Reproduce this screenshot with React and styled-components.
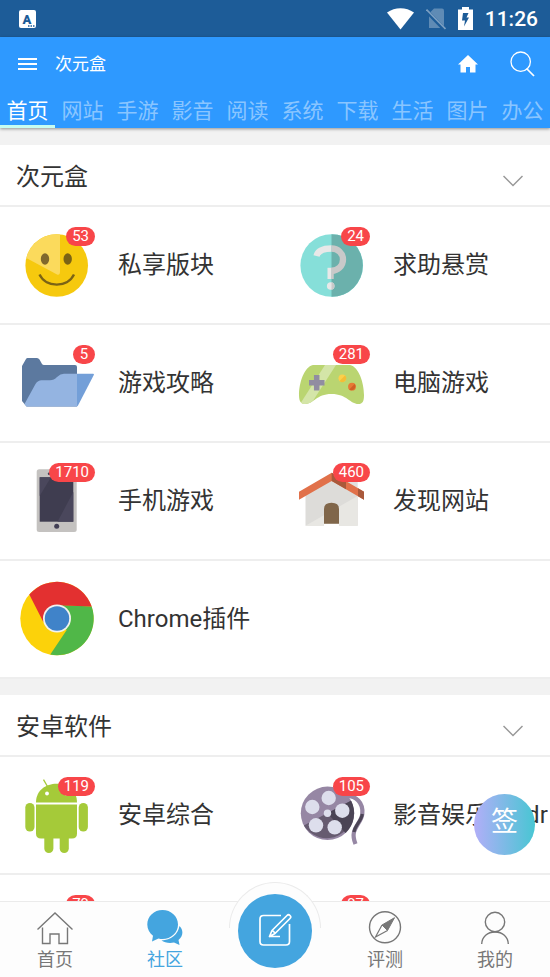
import React, { useState } from "react";
import styled, { createGlobalStyle, css } from "styled-components";

const GlobalStyle = createGlobalStyle`
  :root {
    --color-primary: #2e99ff;
    --color-primary-dark: #1d5c98;
    --color-accent: #44a5df;
    --color-badge: #f84649;
    --color-text: #333333;
    --color-muted: #777777;
    --color-line: #eeeeee;
    --color-back: #f2f2f2;
  }
  * {
    box-sizing: border-box;
  }
  body {
    margin: 0;
    font-family: Roboto, "Noto Sans CJK SC", sans-serif;
    color: var(--color-text);
    background: var(--color-back);
  }
  button {
    margin: 0;
    padding: 0;
    border: 0;
    background: none;
    font: inherit;
    color: inherit;
    cursor: pointer;
  }
  a {
    color: inherit;
    text-decoration: none;
  }
  svg {
    display: block;
  }
`;

const Page = styled.div`
  height: 100vh;
  display: flex;
  flex-direction: column;
  overflow: hidden;
`;

const StatusBar = styled.div`
  height: 37px;
  flex: none;
  display: flex;
  align-items: center;
  gap: 12px;
  padding: 0 12px 0 19px;
  background: var(--color-primary-dark);
  color: #ffffff;
`;
const Spacer = styled.div`
  flex: 1;
`;
const Clock = styled.time`
  font-size: 21px;
  font-weight: 500;
  line-height: 24px;
`;

const Header = styled.header`
  flex: none;
  position: relative;
  background: var(--color-primary);
  color: #ffffff;
  box-shadow: 0 1px 3px rgba(0, 0, 0, 0.4);
`;
const Toolbar = styled.div`
  height: 55px;
  display: flex;
  align-items: center;
  padding: 0 15px 2px 18px;
`;
const Title = styled.h1`
  flex: 1;
  margin: 0 0 0 17px;
  font-size: 17px;
  font-weight: 400;
  line-height: 24px;
`;
const IconButton = styled.button`
  margin-left: ${({ $space }) => $space || "0"};
`;
const Tabs = styled.nav`
  display: flex;
  overflow-x: auto;
  scrollbar-width: none;
`;
const Tab = styled.button`
  flex: 0 0 55px;
  height: 36px;
  padding-top: 2px;
  font-size: 21px;
  line-height: 34px;
  white-space: nowrap;
  color: rgba(255, 255, 255, 0.46);
  ${({ $active }) => $active && css`
    color: #ffffff;
    box-shadow: inset 0 -3px #c6fcf1;
  `}
`;

const Content = styled.main`
  flex: 1;
  min-height: 0;
  padding-top: 17px;
  overflow-y: auto;
  scrollbar-width: none;
`;
const Group = styled.section`
  margin-bottom: 16px;
  background: #ffffff;
`;
const GroupHead = styled.button`
  width: 100%;
  height: 62px;
  display: flex;
  align-items: center;
  justify-content: space-between;
  padding: 3px 27px 0 16px;
  border-bottom: 2px solid var(--color-line);
  font-size: 24px;
  line-height: 32px;
  & > svg {
    margin-top: 8px;
  }
`;
const Row = styled.div`
  display: grid;
  grid-template-columns: 1fr 1fr;
  height: 118px;
  border-bottom: 2px solid var(--color-line);
`;
const Forum = styled.a`
  min-width: 0;
  display: flex;
  align-items: center;
  gap: 24px;
  padding: 2px 2px 0 20px;
`;
const ForumIcon = styled.span`
  flex: none;
  position: relative;
  width: 74px;
  height: 74px;
`;
const Badge = styled.span`
  position: absolute;
  top: -2px;
  right: -1px;
  min-width: 22px;
  padding: 0 6px;
  border-radius: 10px;
  background: var(--color-badge);
  color: #ffffff;
  font-size: 15px;
  line-height: 19px;
  text-align: center;
`;
const ForumName = styled.span`
  flex: 1;
  height: 32px;
  margin-bottom: 2px;
  overflow: hidden;
  word-break: break-all;
  font-size: 24px;
  line-height: 32px;
`;

const SignButton = styled.button`
  position: fixed;
  right: 15px;
  bottom: 122px;
  width: 61px;
  height: 61px;
  padding-bottom: 6px;
  border-radius: 50%;
  background: linear-gradient(90deg, #b2aef8, #48c6d3);
  color: #ffffff;
  font-size: 27px;
  line-height: 40px;
`;

const BottomNav = styled.nav`
  flex: none;
  position: relative;
  height: 76px;
  display: flex;
  background: #fdfdfd;
  border-top: 1px solid #ebebeb;
`;
const NavItem = styled.a`
  flex: 1;
  display: flex;
  flex-direction: column;
  align-items: center;
  gap: 1px;
  padding-top: 8px;
  font-size: 18px;
  line-height: 26px;
  color: ${({ $active }) => ($active ? "var(--color-accent)" : "var(--color-muted)")};
`;
const NavCenter = styled.div`
  flex: 1;
  display: flex;
  justify-content: center;
`;
const Dome = styled.span`
  position: absolute;
  top: -20px;
  width: 92px;
  height: 46px;
  border: 1px solid #ebebeb;
  border-bottom: 0;
  border-radius: 46px 46px 0 0;
  background: #fdfdfd;
`;
const PostButton = styled.button`
  position: absolute;
  top: -8px;
  width: 74px;
  height: 74px;
  display: flex;
  align-items: center;
  justify-content: center;
  border-radius: 50%;
  background: var(--color-accent);
  color: #ffffff;
`;

/* status bar glyphs */
const AppGlyph = () => (
  <svg width="17" height="18" viewBox="0 0 17 18" aria-hidden="true">
    <rect width="17" height="18" rx="2" fill="#fff" />
    <text x="8" y="14" textAnchor="middle" fontFamily="Roboto" fontSize="13" fontWeight="900" fill="#1d5c98">A</text>
    <path d="M9 16h1.5M11.5 16H13M14 16h1.5" stroke="#1d5c98" strokeWidth="1.4" />
  </svg>
);
const WifiGlyph = () => (
  <svg width="27" height="22" viewBox="0 0 27 22" aria-hidden="true">
    <path d="M0 4.5C8-1.2 19-1.2 27 4.5L13.5 21.5Z" fill="#fff" />
  </svg>
);
const NoSimGlyph = () => (
  <svg width="20" height="22" viewBox="0 0 20 22" aria-hidden="true">
    <path d="M8 .5H16q2 0 2 2V20H3V5.5Z" fill="#5f8bb5" />
    <path d="M0 2.5 19 22" stroke="#1d5c98" strokeWidth="4" />
    <path d="M.5 1.5 19.5 21" stroke="#7b9fc2" strokeWidth="1.7" />
  </svg>
);
const BatteryGlyph = () => (
  <svg width="15" height="23" viewBox="0 0 15 23" aria-hidden="true">
    <path d="M4 0h7v2.5h4V23H0V2.5h4Z" fill="#fff" />
    <path d="M5 6h5.5L8.5 10.5H11L6 19.5 7 13.5H4Z" fill="#1d5c98" />
  </svg>
);

/* toolbar glyphs */
const MenuGlyph = () => (
  <svg width="20" height="14" viewBox="0 0 20 14" aria-hidden="true">
    <path d="M0 2h19M0 7h19M0 12h19" stroke="#fff" strokeWidth="2" />
  </svg>
);
const HomeGlyph = () => (
  <svg width="20" height="18" viewBox="0 0 20 18" aria-hidden="true">
    <path d="M10 0 0 9.5H2.5V17.5H8V12H12V17.5H17.5V9.5H20Z" fill="#fff" />
  </svg>
);
const SearchGlyph = () => (
  <svg width="25" height="26" viewBox="0 0 25 26" fill="none" stroke="#fff" strokeWidth="1.3" aria-hidden="true">
    <circle cx="10.7" cy="10.7" r="9.7" />
    <path d="M16.5 17.5 24 25" strokeWidth="1.7" />
  </svg>
);
const Chevron = () => (
  <svg width="20" height="12" viewBox="0 0 20 12" fill="none" stroke="#999" strokeWidth="1.5" aria-hidden="true">
    <path d="M.5 1 10 10.5 19.5 1" />
  </svg>
);

/* forum pictures, all on a 74 x 74 field */
const Picture = ({ children }) => (
  <svg width="74" height="74" viewBox="0 0 74 74" overflow="visible" aria-hidden="true">{children}</svg>
);
const Smiley = () => (
  <Picture>
    <circle cx="36.7" cy="36.5" r="31.3" fill="#f6c90e" />
    <path d="M40 5.4A31.3 31.3 0 0 0 6.3 29L37 45.5q3 1 3-3Z" fill="#fbda5c" />
    <ellipse cx="25" cy="30" rx="4.2" ry="5.8" fill="#80682d" />
    <ellipse cx="47.7" cy="30" rx="4.2" ry="5.8" fill="#7b6315" />
    <path d="M19.5 45.5C26 59 47.5 59 54 45.5" fill="none" stroke="#7b6315" strokeWidth="2.4" />
  </Picture>
);
const Question = () => (
  <Picture>
    <circle cx="36.7" cy="36.5" r="31.3" fill="#86dfd9" />
    <path d="M36.5 5.2A31.3 31.3 0 0 1 36.5 67.8Z" fill="#6bb1ac" />
    <g fill="none" strokeWidth="6.3">
      <path d="M21.500 27C23 21.500 29 19.500 36.500 19.500" stroke="#e8e8e8" />
      <path d="M36.5 19.5C43 19.5 48 24.5 48 30.5C48 37 43 41.5 36.5 42" stroke="#c9c9c9" />
      <path d="M34.5 38.8V50" stroke="#e8e8e8" strokeWidth="4" />
      <path d="M37.5 38.8V50" stroke="#c9c9c9" strokeWidth="2.5" />
    </g>
    <circle cx="35.7" cy="57" r="3.8" fill="#e8e8e8" />
    <path d="M36.5 53.3A3.8 3.8 0 0 1 36.5 60.7Z" fill="#c9c9c9" />
  </Picture>
);
const Folder = () => (
  <Picture>
    <g transform="translate(0 1)">
      <path d="M2 18 6 11q.6-1 1.5-1H17q1.5 0 2.5 1.5L22 16q.7 1 2 1H55q2 0 2 2V58.5H6.5L2 53Z" fill="#5c799f" />
      <path d="M6.5 58.5 4.5 56 15.5 36Q18 32.3 21.5 32.3H30Q34 32.3 37 29Q40.5 25.8 44 25.8H57V58.5Z" fill="#94b4e1" />
      <path d="M57 25.8H73q1.3 0 .8 1.2L58 57.5 57 58.5Z" fill="#739fd8" />
    </g>
  </Picture>
);
const Gamepad = () => (
  <Picture>
    <path
      d="M18 18H55C64 20 69 36 69 48C69 54.5 67.5 57 63.5 57C55 57 52 47 36.5 47C21 47 19 57 10 57C6 57 4 54.5 4 48C4 36 9 20 18 18Z"
      fill="#bad571"
    />
    <path d="M30 18H41L18.5 53C16 55.5 13.5 57 10 57C8 57 6.8 56.5 6 55.5Z" fill="#d4e5a8" />
    <path d="M21.7 28V43.5M14 35.7H29.5" stroke="#918da1" strokeWidth="5.5" />
    <circle cx="47.3" cy="31.3" r="3.8" fill="#fbd04b" />
    <path d="M50 28.6A3.8 3.8 0 0 1 44.6 34Z" fill="#f4bd36" />
    <circle cx="57" cy="39.7" r="3.9" fill="#e67a35" />
    <path d="M59.7 37A3.9 3.9 0 0 1 54.3 42.4Z" fill="#cf5f26" />
  </Picture>
);
const Phone = () => (
  <Picture>
    <rect x="16.7" y="4.3" width="40" height="62.7" rx="2.5" fill="#c4c2c0" />
    <rect x="19.7" y="12.3" width="33.6" height="44.4" fill="#3f3d50" />
    <path d="M19.7 12.3H31L19.7 31Z" fill="#4a475c" />
    <path d="M53.3 27V56.7H37.5Z" fill="#4a475c" />
    <circle cx="29" cy="8.7" r="1.2" fill="#423f55" />
    <circle cx="36.7" cy="61.3" r="2.5" fill="#423f55" />
  </Picture>
);
const House = () => (
  <Picture>
    <path d="M51 10H62.7V30H51Z" fill="#e2e1df" />
    <path d="M10.5 28 36.7 13 62.7 28V60.7H10.5Z" fill="#dddcd9" />
    <path d="M10.5 60.7 62.7 31V60.7Z" fill="#e8e7e3" />
    <path d="M29 58.7H44V61H29Z" fill="#fff" />
    <path d="M29 58.7V44Q29 37.7 36.5 37.7T44 44V58.7Z" fill="#80664a" />
    <path d="M4 26.7 36.7 7.7 69 26.7V34.7L36.7 16 4 34.7Z" fill="#e1714a" />
    <path d="M36.7 7.7 51 16V24.3L36.7 16Z" fill="#a9593b" />
    <path d="M63 23.2 69 26.7V34.7L63 31.2Z" fill="#a9593b" />
  </Picture>
);
const Chrome = () => (
  <Picture>
    <g transform="translate(0 -1)">
      <circle cx="37" cy="36.5" r="36.7" fill="#fcd20a" />
      <path d="M30.3 72.6A36.7 36.7 0 0 0 71.7 24.5L40 23 37 36.5 46.7 48Z" fill="#50b748" />
      <path d="M9.3 12.5A36.7 36.7 0 0 1 71.7 24.5L37 23.2 23.3 40Z" fill="#e33030" />
      <circle cx="37" cy="36.5" r="14" fill="#f2f2ee" />
      <circle cx="37" cy="36.5" r="12.2" fill="#4083c9" />
    </g>
  </Picture>
);
const Android = () => (
  <Picture>
    <g transform="translate(0 1)">
      <g fill="#a5ca39">
        <path d="M16 22.5C16 -2.5 57 -2.5 57 22.5Z" />
        <path d="M16 24.5H57V53.5Q57 58.5 52 58.5H21Q16 58.5 16 53.5Z" />
        <rect x="5.3" y="23" width="9.2" height="28.5" rx="4.6" />
        <rect x="58.7" y="23" width="9.2" height="28.5" rx="4.6" />
        <path d="M24.3 55H33.4V68.5a4.5 4.5 0 0 1-9.1 0Z" />
        <path d="M39.7 55H48.8V68.5a4.5 4.5 0 0 1-9.1 0Z" />
      </g>
      <path d="M23.5-.3 27.5 6.5M49.5-.3 45.5 6.5" stroke="#a5ca39" strokeWidth="1.3" />
      <circle cx="27" cy="13.5" r="1.9" fill="#fff" />
      <circle cx="46" cy="13.5" r="1.9" fill="#fff" />
    </g>
  </Picture>
);
const FilmReel = () => (
  <Picture>
    <g transform="translate(0 1)">
      <g fill="none" strokeWidth="4.2">
        <path d="M50 16C61 15 68.5 23 67.3 34C66 45 54 48 60.5 64" stroke="#9687a4" />
        <path d="M67.3 34C66.5 41 60 45 59 52" stroke="#4b4455" strokeWidth="3.2" />
      </g>
      <circle cx="32.5" cy="33.3" r="26.7" fill="#9687a4" />
      <path d="M8.8 45.5 56 20.8A26.7 26.7 0 0 1 8.8 45.5Z" fill="#665b70" />
      <path d="M56 20.8A26.7 26.7 0 0 1 50.5 53L32.5 33.3Z" fill="#4b4455" />
      <g fill="#dddeec">
        <circle cx="33.7" cy="18" r="7.2" />
        <circle cx="17.3" cy="27" r="7.2" />
        <circle cx="47.3" cy="30.7" r="7.2" />
        <circle cx="21" cy="45.3" r="7.2" />
        <circle cx="39.7" cy="47.3" r="7.2" />
        <circle cx="32.5" cy="33.3" r="3.7" />
      </g>
    </g>
  </Picture>
);

/* bottom navigation glyphs */
const NavGlyph = ({ children }) => (
  <svg width="36" height="36" viewBox="0 0 36 36" fill="none" stroke="currentColor" strokeWidth="1.4" aria-hidden="true">
    {children}
  </svg>
);
const NavHome = () => (
  <NavGlyph>
    <path d="M.5 19.5 18 3 35.5 19.5" />
    <path d="M5.5 17.5V33.5H13V24H22V33.5H30.5V17.5" />
  </NavGlyph>
);
const NavChat = () => (
  <NavGlyph>
    <path
      d="M32.5 16C36.5 20 36.5 26 31.5 30L32.5 35 27 32.5C22 33.5 17.5 32.5 14.5 30.5C24 30 31 24.5 32.5 16Z"
      fill="currentColor"
      stroke="none"
    />
    <path
      d="M15.5 0C24 0 31 6.3 31 14.5S24 29 15.5 29Q13.5 29 11.5 28.5L5 31.5 6 25.8C2.5 23 .3 19 .3 14.5C.3 6.3 7 0 15.5 0Z"
      fill="currentColor"
      stroke="none"
    />
  </NavGlyph>
);
const NavCompass = () => (
  <NavGlyph>
    <circle cx="18" cy="17.3" r="15.5" />
    <path d="M27.5 7.7 20.5 20.5 15 15Z" fill="currentColor" strokeWidth="1" />
    <path d="M15 15 8.5 27 20.5 20.5" strokeWidth="1.2" />
  </NavGlyph>
);
const NavUser = () => (
  <NavGlyph>
    <circle cx="18" cy="12" r="9.7" />
    <path d="M4.7 34C5 26.5 10.5 22 18 22S31 26.5 31.3 34" />
  </NavGlyph>
);
const PostGlyph = () => (
  <svg width="36" height="36" viewBox="0 0 36 36" fill="none" stroke="currentColor" strokeWidth="1.7" strokeLinejoin="round" aria-hidden="true">
    <path d="M24 2.5H6.5Q3 2.5 3 6V28.5Q3 32 6.5 32H29Q32.5 32 32.5 28.5V11" />
    <path d="M12.5 23.5 15 17.5 30 2.5Q31.5 1 33 2.5T33 5.5L18 20.5ZM12.5 23.5H23M15.5 17.5 18 20" />
  </svg>
);

const tabs = ["首页", "网站", "手游", "影音", "阅读", "系统", "下载", "生活", "图片", "办公"];

const groups = [
  {
    name: "次元盒",
    rows: [
      [{ name: "私享版块", count: 53, icon: Smiley }, { name: "求助悬赏", count: 24, icon: Question }],
      [{ name: "游戏攻略", count: 5, icon: Folder }, { name: "电脑游戏", count: 281, icon: Gamepad }],
      [{ name: "手机游戏", count: 1710, icon: Phone }, { name: "发现网站", count: 460, icon: House }],
      [{ name: "Chrome插件", icon: Chrome }],
    ],
  },
  {
    name: "安卓软件",
    rows: [
      [{ name: "安卓综合", count: 119, icon: Android }, { name: "影音娱乐(Android)", count: 105, icon: FilmReel }],
      [{ count: 79 }, { count: 97 }],
    ],
  },
];

function ForumGroup({ name, rows }) {
  const [open, setOpen] = useState(true);

  return (
    <Group>
      <GroupHead type="button" aria-expanded={open} onClick={() => setOpen(!open)}>
        {name}
        <Chevron />
      </GroupHead>
      {open && rows.map((forums, index) => (
        <Row key={index}>
          {forums.map(({ name, count, icon: Icon }) => (
            <Forum href="#" key={name || count}>
              <ForumIcon>
                {Icon && <Icon />}
                {count && <Badge>{count}</Badge>}
              </ForumIcon>
              <ForumName>{name}</ForumName>
            </Forum>
          ))}
        </Row>
      ))}
    </Group>
  );
}

export default function App() {
  const [tab, setTab] = useState(tabs[0]);

  return (
    <Page>
      <GlobalStyle />
      <StatusBar>
        <AppGlyph />
        <Spacer />
        <WifiGlyph />
        <NoSimGlyph />
        <BatteryGlyph />
        <Clock>11:26</Clock>
      </StatusBar>
      <Header>
        <Toolbar>
          <IconButton type="button" aria-label="菜单"><MenuGlyph /></IconButton>
          <Title>次元盒</Title>
          <IconButton type="button" aria-label="首页"><HomeGlyph /></IconButton>
          <IconButton type="button" aria-label="搜索" $space="32px"><SearchGlyph /></IconButton>
        </Toolbar>
        <Tabs>
          {tabs.map((item) => (
            <Tab type="button" key={item} $active={item === tab} onClick={() => setTab(item)}>{item}</Tab>
          ))}
        </Tabs>
      </Header>
      <Content>
        {groups.map((group) => <ForumGroup key={group.name} {...group} />)}
      </Content>
      <SignButton type="button">签</SignButton>
      <BottomNav>
        <NavItem href="#"><NavHome />首页</NavItem>
        <NavItem href="#" $active><NavChat />社区</NavItem>
        <NavCenter>
          <Dome />
          <PostButton type="button" aria-label="发帖"><PostGlyph /></PostButton>
        </NavCenter>
        <NavItem href="#"><NavCompass />评测</NavItem>
        <NavItem href="#"><NavUser />我的</NavItem>
      </BottomNav>
    </Page>
  );
}
